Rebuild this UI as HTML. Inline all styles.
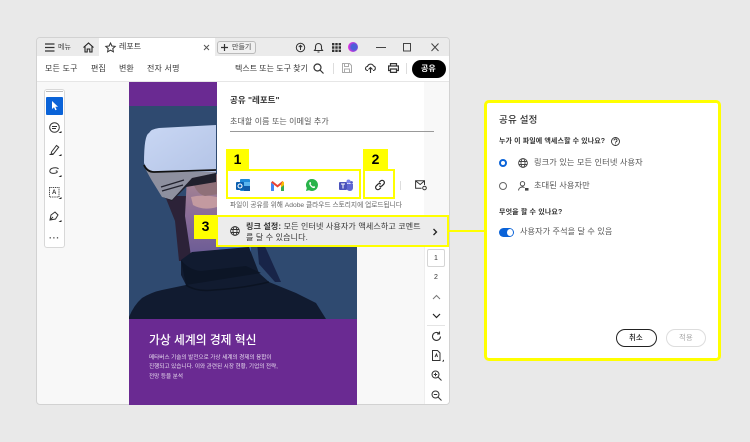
<!DOCTYPE html>
<html lang="ko"><head><meta charset="utf-8"><style>
html,body{margin:0;padding:0}
body{width:750px;height:442px;background:#e9e9e9;position:relative;overflow:hidden;font-family:"Liberation Sans","Noto Sans CJK KR",sans-serif;color:#333}
.a{position:absolute}
.t{position:absolute;white-space:nowrap;line-height:1}
.y{position:absolute;background:#ff0;color:#000;font-weight:700;font-size:14px;text-align:center}
.b{position:absolute;border:2px solid #ff0;box-sizing:border-box}
svg{position:absolute;overflow:visible}
</style></head><body>

<!-- window -->
<div class="a" style="left:36px;top:37px;width:414px;height:368px;background:#f8f8f8;border:1px solid #d2d2d2;border-radius:4px;box-sizing:border-box"></div>
<div class="a" style="left:37px;top:38px;width:412px;height:18px;background:#ebebeb;border-radius:3px 3px 0 0"></div>
<div class="a" style="left:99px;top:38px;width:116px;height:18px;background:#fff"></div>
<div class="a" style="left:37px;top:56px;width:412px;height:26px;background:#fff;border-bottom:1px solid #e6e6e6;box-sizing:border-box"></div>

<!-- title bar -->
<svg style="left:45px;top:43px" width="10" height="9"><path d="M0 1h9.500M0 4.500h9.500M0 8h9.500" stroke="#333" stroke-width="1.200"/></svg>
<div class="t" style="left:58px;top:44px;font-size:7px;color:#444">메뉴</div>
<svg style="left:83px;top:42px" width="11" height="11" fill="none" stroke="#222" stroke-width="1.100"><path d="M.5 5.500 5.500 1l5 4.500M2 4.500V10h2.200V7h2.600v3H9V4.500"/></svg>
<svg style="left:105px;top:42px" width="11" height="11" fill="none" stroke="#333"><path d="M5.500 1l1.400 3 3.300.4-2.400 2.200.6 3.200-2.900-1.600-2.900 1.600.6-3.200L.8 4.400 4.100 4z"/></svg>
<div class="t" style="left:119px;top:43px;font-size:8px;color:#333">레포트</div>
<svg style="left:203px;top:44px" width="7" height="7" stroke="#555"><path d="M1 1l5 5M6 1 1 6"/></svg>
<div class="a" style="left:217px;top:41px;width:39px;height:13px;background:#f0f0f0;border:1px solid #bbb;border-radius:3px;box-sizing:border-box"></div>
<svg style="left:221px;top:44px" width="7" height="7" stroke="#333" stroke-width="1.200"><path d="M3.500 0v7M0 3.500h7"/></svg>
<div class="t" style="left:232px;top:44px;font-size:7px;color:#444">만들기</div>
<svg style="left:295px;top:42px" width="11" height="11" fill="none" stroke="#333"><circle cx="5.500" cy="5.500" r="4.200"/><path d="M5.500 8V3.500M3.800 5 5.500 3.300 7.200 5"/></svg>
<svg style="left:313px;top:42px" width="11" height="11" fill="none" stroke="#333" stroke-width="1.100"><path d="M1.500 8.500h8L8.500 7V4.500a3 3 0 0 0-6 0V7zM4.500 10h2"/></svg>
<svg style="left:332px;top:43px" width="9" height="9" fill="#333"><path d="M0 0h2.400v2.400H0zM3.300 0h2.400v2.400H3.300zM6.600 0H9v2.400H6.600zM0 3.300h2.400v2.400H0zM3.300 3.300h2.400v2.400H3.300zM6.600 3.300H9v2.400H6.600zM0 6.600h2.400V9H0zM3.300 6.600h2.400V9H3.300zM6.600 6.600H9V9H6.600z"/></svg>
<div class="a" style="left:348px;top:42px;width:10px;height:10px;border-radius:50%;background:radial-gradient(circle at 60% 50%,#4a5fd8 0 35%,#e030e0 70%)"></div>
<svg style="left:376px;top:42px" width="64" height="11" fill="none" stroke="#444"><path d="M0 5.500h10"/><rect x="27.500" y="1.500" width="7" height="7.500"/><path d="M55.500 1.500l7 7.500M62.500 1.500l-7 7.500"/></svg>

<!-- menu row -->
<div class="t" style="left:45px;top:65px;font-size:8px;letter-spacing:.2px;color:#333">모든 도구</div>
<div class="t" style="left:91px;top:65px;font-size:8px;color:#333">편집</div>
<div class="t" style="left:119px;top:65px;font-size:8px;color:#333">변환</div>
<div class="t" style="left:147px;top:65px;font-size:8px;letter-spacing:.2px;color:#333">전자 서명</div>
<div class="t" style="left:235px;top:65px;font-size:8px;color:#333">텍스트 또는 도구 찾기</div>
<svg style="left:313px;top:63px" width="11" height="11" fill="none" stroke="#333" stroke-width="1.200"><circle cx="4.500" cy="4.500" r="3.500"/><path d="M7 7l3.500 3.500"/></svg>
<div class="a" style="left:333px;top:63px;width:1px;height:11px;background:#ddd"></div>
<svg style="left:342px;top:63px" width="10" height="10" fill="none" stroke="#aaa"><path d="M.5.500h7l2 2v7H.5zM2.500.500v3h4v-3M2.500 9.500v-3.500h5v3.500"/></svg>
<svg style="left:365px;top:62px" width="11" height="12" fill="none" stroke="#333" stroke-width="1.100"><path d="M3 8.500H2.500a2 2 0 0 1 0-4 3.200 3.200 0 0 1 6-.5 2.300 2.300 0 0 1 0 4.500H8M5.500 11V5.500M3.500 7.500l2-2 2 2"/></svg>
<svg style="left:388px;top:63px" width="11" height="10" fill="none" stroke="#333" stroke-width="1.200"><path d="M2.500 3V.6h6V3M2.500 7.500H.6V3h9.800v4.500H8.500M2.500 6h6v3.400h-6z"/></svg>
<div class="a" style="left:406px;top:63px;width:1px;height:11px;background:#ddd"></div>
<div class="a" style="left:412px;top:60px;width:34px;height:18px;border-radius:9px;background:#000"></div>
<div class="t" style="left:421px;top:65px;font-size:8px;color:#fff;font-weight:700">공유</div>

<!-- left tools -->
<div class="a" style="left:44px;top:89px;width:21px;height:159px;background:#fff;border:1px solid #d8d8d8;border-radius:3px;box-sizing:border-box"></div>
<div class="a" style="left:46px;top:91px;width:17px;height:1px;background:#bbb"></div>
<div class="a" style="left:46px;top:97px;width:17px;height:18px;background:#0a63d8;border-radius:1px"></div>
<svg style="left:52px;top:101px" width="7" height="10" fill="#fff"><path d="M0 0v8l2-1.800 1.400 3 1.300-.6-1.400-2.900H6z"/></svg>
<svg style="left:49px;top:122px" width="14" height="14" fill="none" stroke="#333"><circle cx="5.500" cy="5.500" r="4.800"/><path d="M3 4.500h5M3 6.500h4"/><path d="M9.500 11h3V9z" fill="#222" stroke="none"/></svg>
<svg style="left:49px;top:144px" width="14" height="14" fill="none" stroke="#333"><path d="M2.500 8l5-6.500 2.200 1.700-5 6.400-2.600.8zM.5 10.500h4"/><path d="M9.500 12h3v-2z" fill="#222" stroke="none"/></svg>
<svg style="left:49px;top:166px" width="14" height="13" fill="none" stroke="#333"><path d="M9.500 3C8 .8 1 1.500.8 5c0 2.500 4 2.800 6.500 1.800 1.500-.6 1-2.200-.5-1.800"/><path d="M9.500 11h3V9z" fill="#222" stroke="none"/></svg>
<svg style="left:49px;top:187px" width="14" height="14" fill="none" stroke="#333" stroke-dasharray="1 .8"><rect x=".5" y=".5" width="9.500" height="9.500"/><path d="M9.500 12h3v-2z" fill="#222" stroke="none"/></svg>
<div class="t" style="left:52px;top:190px;font-size:6px;font-weight:700;color:#333">A</div>
<svg style="left:49px;top:210px" width="14" height="14" fill="none" stroke="#333"><path d="M1 10l1-5 4-3 3 3-2.500 4zM1 10l3-3"/><path d="M9.500 12h3v-2z" fill="#222" stroke="none"/></svg>
<div class="t" style="left:49px;top:234px;font-size:9px;color:#555;font-weight:700;letter-spacing:.6px">···</div>

<!-- document -->
<div class="a" style="left:129px;top:82px;width:228px;height:323px;background:#6a2a92"></div>
<svg style="left:129px;top:106px" width="228" height="213" viewBox="0 0 228 213">
<defs><linearGradient id="vr" x1="0" y1="0" x2="1" y2="1"><stop offset="0" stop-color="#c9d7f4"/><stop offset="1" stop-color="#b4c4e6"/></linearGradient>
<linearGradient id="sk" x1="0" y1="0" x2="0" y2="1"><stop offset="0" stop-color="#a98791"/><stop offset=".5" stop-color="#8a6d98"/><stop offset="1" stop-color="#6a5b96"/></linearGradient></defs>
<rect width="228" height="213" fill="#2f4a70"/>
<!-- hair -->
<path d="M36 90l24 0 2 65H50l-4-40z" fill="#2c2238"/>
<path d="M128 136l6 0 18 40-6 0-16-18z" fill="#182448"/>
<!-- face / neck -->
<path d="M58 70h42v80H62l-6-40z" fill="url(#sk)"/>
<path d="M62 91q12-3 26 0v10q-14 4-24-2z" fill="#c39aa0"/>
<path d="M62 70q4 18 14 20l14-2V68z" fill="#8f7078"/>
<path d="M86 130h36v18H92z" fill="#3f6bb0"/>
<!-- sweater -->
<path d="M0 213v-2q5-12 13-19 10-6 20-8l24-5-5-10v-15l11-8 57-5 10 26 10 9 27 11 20 10 10 16z" fill="#111b30"/>
<path d="M52 154q8 10 20 11l45-5 15 7-75 12z" fill="#0c1526"/>
<path d="M57 179q10 7 28 5 30-2 55-8" stroke="#0b1322" stroke-width="1.500" fill="none"/>
<!-- headset -->
<path d="M15 60q6 12 10 18l8 13 10 3 20-22 24-5V60H15z" fill="#8e909f"/>
<path d="M33 91l10 3 20-22 24-5v9l-30 5-14 14z" fill="#20202c"/>
<path d="M32 81l23-7M33 85l21-6" stroke="#22222e" stroke-width="1.200" fill="none"/>
<path d="M15 57q0-28 5-30 2-4 10-5l57-3v47H40q-22 2-25-9z" fill="url(#vr)"/>
<path d="M15 59q3 7 10 7l62-2" stroke="#111" stroke-width="1.800" fill="none"/>
</svg>
<div class="t" style="left:149px;top:335px;font-size:11.800px;color:#fff;font-weight:500">가상 세계의 경제 혁신</div>
<div class="t" style="left:149px;top:354px;font-size:5.600px;color:#e8dcef;line-height:9.300px">메타버스 기술의 발전으로 가상 세계의 경제의 융합이<br>진행되고 있습니다. 이와 관련된 시장 현황, 기업의 전략,<br>전망 등을 분석</div>

<!-- right rail -->
<div class="a" style="left:424px;top:245px;width:25px;height:159px;background:#fff;border-left:1px solid #eee;box-sizing:border-box;border-radius:0 0 3px 0"></div>
<div class="a" style="left:427px;top:249px;width:18px;height:18px;background:#fff;border:1px solid #d5d5d5;border-radius:2px;box-sizing:border-box"></div>
<div class="t" style="left:434px;top:255px;font-size:7px;color:#333">1</div>
<div class="t" style="left:434px;top:274px;font-size:7px;color:#333">2</div>
<svg style="left:432px;top:294px" width="9" height="6" fill="none" stroke="#777"><path d="M1 5l3.500-3.500L8 5"/></svg>
<svg style="left:432px;top:313px" width="9" height="6" fill="none" stroke="#222" stroke-width="1.200"><path d="M1 1l3.500 3.500L8 1"/></svg>
<div class="a" style="left:427px;top:325px;width:18px;height:1px;background:#e4e4e4"></div>
<svg style="left:431px;top:331px" width="11" height="11" fill="none" stroke="#333" stroke-width="1.100"><path d="M9.500 5.500a4 4 0 1 1-1.500-3.200M8.500 .5v2.500H6"/></svg>
<svg style="left:432px;top:350px" width="13" height="13" fill="none" stroke="#333"><path d="M.5.500h5l2.500 2.500v7.500H.5zM3 7l1.500-3 1 3"/><path d="M10 11.500h2v-2z" fill="#222" stroke="none"/></svg>
<svg style="left:431px;top:370px" width="11" height="11" fill="none" stroke="#333"><circle cx="4.500" cy="4.500" r="3.500"/><path d="M7 7l3.500 3.500M2.800 4.500h3.400M4.500 2.800v3.400"/></svg>
<svg style="left:431px;top:390px" width="11" height="11" fill="none" stroke="#333"><circle cx="4.500" cy="4.500" r="3.500"/><path d="M7 7l3.500 3.500M2.800 4.500h3.400"/></svg>

<!-- share panel -->
<div class="a" style="left:217px;top:82px;width:207px;height:163px;background:#fff"></div>
<div class="t" style="left:230px;top:96px;font-size:8.500px;font-weight:700;color:#333">공유 "레포트"</div>
<div class="t" style="left:230px;top:118px;font-size:8px;color:#555;letter-spacing:.1px">초대할 이름 또는 이메일 추가</div>
<div class="a" style="left:230px;top:131px;width:204px;height:1px;background:#999"></div>

<!-- share icons -->
<svg style="left:236px;top:179px" width="14" height="13"><rect x="4" y="0" width="10" height="12" rx="1" fill="#1f8ad8"/><rect x="8" y="3" width="6" height="4" fill="#5ab5ee"/><rect x="8" y="7" width="6" height="5" fill="#0f5ba8"/><rect x="0" y="3" width="8" height="8" rx="1" fill="#0a5fb0"/><circle cx="4" cy="7" r="2" fill="none" stroke="#fff" stroke-width="1.100"/></svg>
<svg style="left:271px;top:181px" width="13" height="10"><path d="M0 1.500V10h3V4z" fill="#4285f4"/><path d="M13 1.500V10h-3V4z" fill="#34a853"/><path d="M0 1.500 1.500 0 6.500 4 11.500 0 13 1.500 6.500 6.500z" fill="#ea4335"/><path d="M10 4l1.500-4L13 1.500V4l-3 2.500z" fill="#fbbc04"/></svg>
<svg style="left:306px;top:179px" width="12" height="12"><path d="M6 0a6 6 0 0 0-5.200 9L0 12l3-.8A6 6 0 1 0 6 0z" fill="#29b34a"/><path d="M4 3c-1 .5-1 2 0 3.500s2.500 2.700 3.800 2.600c1-.1 1.400-.9 1.300-1.400L7.900 7l-.7.700C6.300 7.300 5 6.100 4.600 5.100l.6-.7L4.600 3z" fill="#fff"/></svg>
<svg style="left:339px;top:179px" width="14" height="13"><circle cx="9.500" cy="2.500" r="2" fill="#7b83eb"/><circle cx="12.500" cy="3.500" r="1.400" fill="#5059c9"/><path d="M7 5h7v4a3 3 0 0 1-3 3 4 4 0 0 1-4-4z" fill="#5f67d2"/><rect x="0" y="3" width="8" height="8" rx="1" fill="#4b53bc"/><path d="M2 5h4M4 5v4.500" stroke="#fff" stroke-width="1"/></svg>
<svg style="left:374px;top:179px" width="12" height="12" fill="none" stroke="#222" stroke-width="1.200"><path d="M5 3.500l1.500-1.500a2.200 2.200 0 0 1 3.200 3.200L8.200 6.700a2.200 2.200 0 0 1-3 .1M7 8.500l-1.500 1.500a2.200 2.200 0 0 1-3.200-3.200l1.500-1.500a2.200 2.200 0 0 1 3-.1"/></svg>
<div class="a" style="left:400px;top:181px;width:1px;height:9px;background:#ddd"></div>
<svg style="left:415px;top:180px" width="12" height="11" fill="none" stroke="#333"><path d="M9.500 5V.8H.6v7.500h6M.8 1l4.400 3.500L9.300 1"/><circle cx="9.500" cy="8" r="1.800"/></svg>
<div class="t" style="left:230px;top:203px;font-size:6.700px;color:#666">파일이 공유를 위해 Adobe 클라우드 스토리지에 업로드됩니다</div>

<div class="a" style="left:218px;top:217px;width:229px;height:28px;background:#ececec"></div>
<svg style="left:230px;top:226px" width="10" height="10" fill="none" stroke="#333" stroke-width=".9"><circle cx="5" cy="5" r="4.400"/><ellipse cx="5" cy="5" rx="2" ry="4.400"/><path d="M.8 3.500h8.400M.8 6.500h8.400"/></svg>
<div class="t" style="left:246px;top:222px;font-size:8px;line-height:10.500px;color:#333;letter-spacing:.15px"><b>링크 설정:</b> 모든 인터넷 사용자가 액세스하고 코멘트<br>를 달 수 있습니다.</div>
<svg style="left:432px;top:228px" width="6" height="8" fill="none" stroke="#222" stroke-width="1.300"><path d="M1.500 1l3 3-3 3"/></svg>

<!-- yellow annotations -->
<div class="b" style="left:226px;top:169px;width:135px;height:30px"></div>
<div class="y" style="left:226px;top:149px;width:23px;height:21px;line-height:20px">1</div>
<div class="b" style="left:363px;top:169px;width:32px;height:30px"></div>
<div class="y" style="left:363px;top:149px;width:25px;height:21px;line-height:20px">2</div>
<div class="b" style="left:216px;top:215px;width:233px;height:32px"></div>
<div class="y" style="left:194px;top:215px;width:23px;height:24px;line-height:23px">3</div>
<div class="a" style="left:449px;top:230px;width:36px;height:2px;background:#ff0"></div>

<!-- settings panel -->
<div class="a" style="left:484px;top:100px;width:237px;height:261px;background:#fff;border:3px solid #ff0;border-radius:5px;box-sizing:border-box"></div>
<div class="t" style="left:499px;top:116px;font-size:9.500px;font-weight:500;color:#333;letter-spacing:.2px">공유 설정</div>
<div class="t" style="left:499px;top:138px;font-size:7px;font-weight:700;color:#333;letter-spacing:.1px">누가 이 파일에 액세스할 수 있나요?</div>
<svg style="left:611px;top:137px" width="9" height="9" fill="none" stroke="#333" stroke-width=".9"><circle cx="4.500" cy="4.500" r="4"/><path d="M3 3.400a1.500 1.500 0 1 1 2 1.400c-.4.200-.5.500-.5 1M4.500 6.500v.8"/></svg>
<div class="a" style="left:499px;top:159px;width:8px;height:8px;border-radius:50%;background:#fff;border:2.500px solid #0a63d8;box-sizing:border-box"></div>
<svg style="left:518px;top:158px" width="10" height="10" fill="none" stroke="#444" stroke-width=".9"><circle cx="5" cy="5" r="4.400"/><ellipse cx="5" cy="5" rx="2" ry="4.400"/><path d="M.8 3.500h8.400M.8 6.500h8.400"/></svg>
<div class="t" style="left:534px;top:159px;font-size:8.200px;color:#555;letter-spacing:.1px">링크가 있는 모든 인터넷 사용자</div>
<div class="a" style="left:499px;top:182px;width:8px;height:8px;border-radius:50%;border:1px solid #666;box-sizing:border-box"></div>
<svg style="left:518px;top:181px" width="11" height="10" fill="none" stroke="#444" stroke-width=".9"><circle cx="4.500" cy="2.800" r="2.200"/><path d="M.6 9.500c0-2.500 2-3.500 3.900-3.500 1 0 1.500.2 2 .5"/><rect x="7" y="7" width="3.500" height="2.600" fill="#444" stroke="none"/></svg>
<div class="t" style="left:534px;top:182px;font-size:8.200px;color:#555;letter-spacing:.1px">초대된 사용자만</div>
<div class="t" style="left:499px;top:209px;font-size:7px;font-weight:700;color:#333;letter-spacing:.15px">무엇을 할 수 있나요?</div>
<div class="a" style="left:499px;top:228px;width:15px;height:9px;border-radius:5px;background:#0a63d8"></div>
<div class="a" style="left:507px;top:229px;width:6px;height:7px;border-radius:50%;background:#fff"></div>
<div class="t" style="left:520px;top:228px;font-size:8.100px;color:#555;letter-spacing:.1px">사용자가 주석을 달 수 있음</div>
<div class="a" style="left:616px;top:329px;width:41px;height:18px;border:1.300px solid #222;border-radius:9px;box-sizing:border-box"></div>
<div class="t" style="left:629px;top:334px;font-size:7.500px;font-weight:500;color:#222">취소</div>
<div class="a" style="left:666px;top:329px;width:40px;height:18px;border:1px solid #ddd;border-radius:9px;box-sizing:border-box"></div>
<div class="t" style="left:679px;top:334px;font-size:7.500px;color:#aaa">적용</div>
</body></html>
